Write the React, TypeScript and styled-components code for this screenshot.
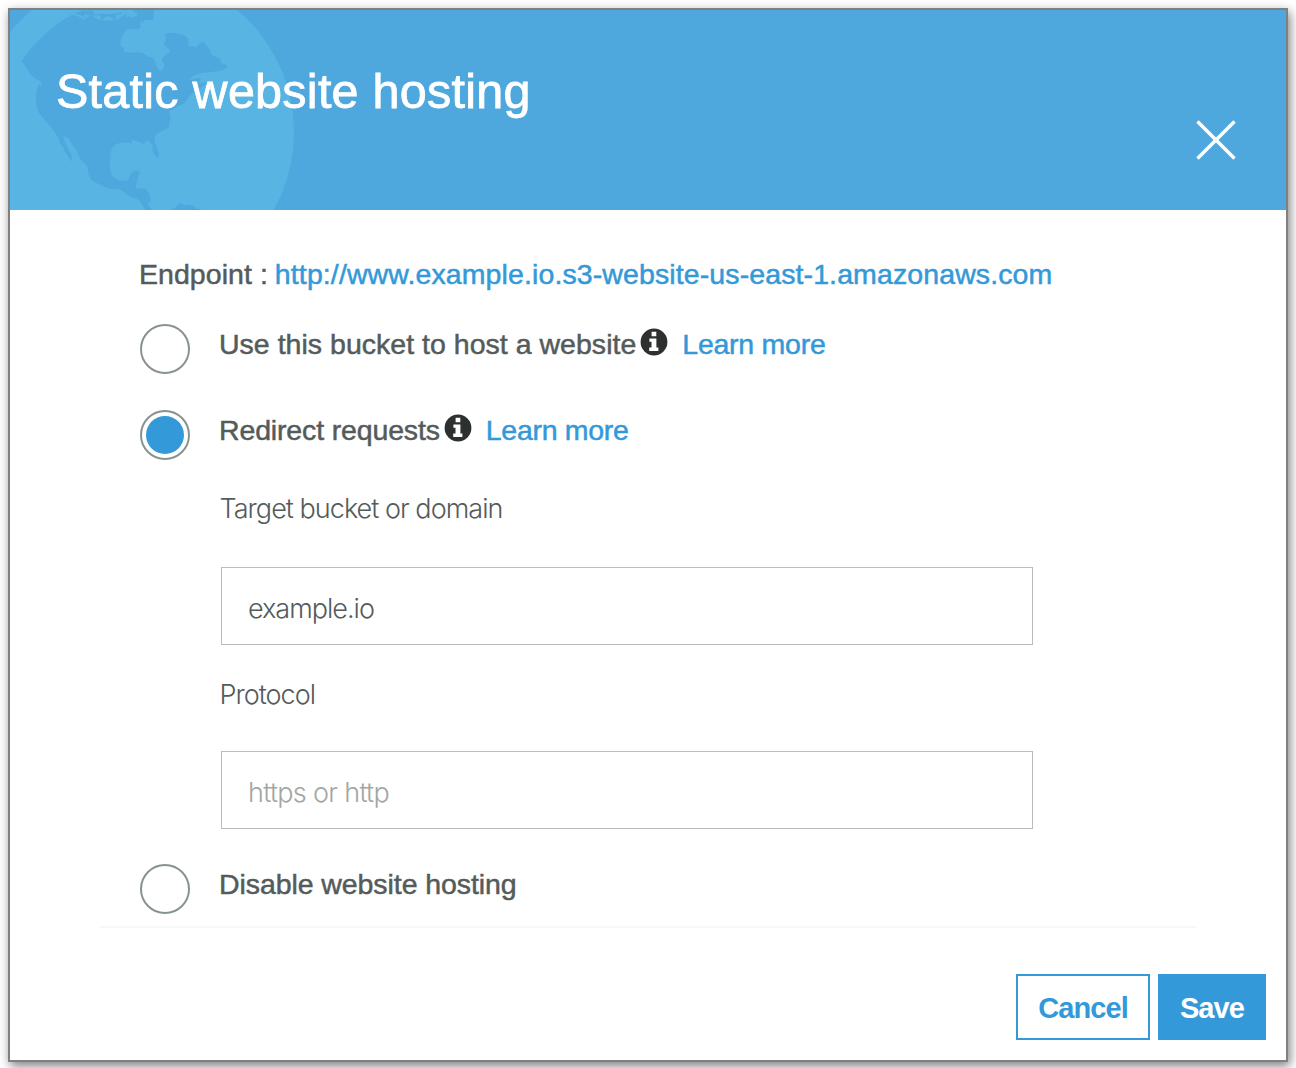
import React, { useState } from "react";
import styled, { createGlobalStyle } from "styled-components";

const GlobalStyle = createGlobalStyle`
  *, *::before, *::after { box-sizing: border-box; }
  body {
    margin: 0;
    background: #fff;
    overflow: hidden;
    font-family: "Liberation Sans", Arial, sans-serif;
    color: #545b5b;
  }
`;

const Page = styled.main`
  height: 1068px;
  padding: 8px;
  overflow: hidden;
`;

const Dialog = styled.section`
  display: flex;
  flex-direction: column;
  width: 1280px;
  height: 1054px;
  border: 2px solid #808080;
  background: #fff;
  box-shadow: 2px 4px 10px rgba(0, 0, 0, 0.5);
`;

const Header = styled.header`
  position: relative;
  flex: none;
  display: flex;
  justify-content: space-between;
  height: 200px;
  padding: 53px 49px 0 46px;
  background: #4ea8dd;
`;

const GlobeArt = styled.svg`
  position: absolute;
  left: 0;
  top: 0;
`;

const Title = styled.h1`
  position: relative;
  margin: 0;
  font-size: 48.5px;
  line-height: 56px;
  font-weight: 400;
  letter-spacing: 0.26px;
  color: #fff;
  -webkit-text-stroke: 0.8px #fff;
`;

const CloseButton = styled.button`
  width: 42px;
  height: 42px;
  margin-top: 56px;
  padding: 0;
  border: 0;
  background: none;
  svg { display: block; }
`;

const Body = styled.div`
  display: flex;
  flex-direction: column;
  margin: 0 90px;
  height: 718px;
  padding: 48px 0 0 40px;
  border-bottom: 2px solid #f6f7f7;
`;

const Text = styled.span<{ $spacing?: number }>`
  font-size: 28.5px;
  line-height: 32px;
  letter-spacing: ${(p) => p.$spacing ?? 0}px;
  white-space: nowrap;
  -webkit-text-stroke: 0.5px currentColor;
`;

const Link = styled(Text).attrs({ as: "a" })`
  color: #3399d8;
`;

const Endpoint = styled.div`
  display: flex;
  gap: 7px;
  height: 66px;
  margin-left: -1px;
`;

const Option = styled.div<{ $height: number }>`
  display: flex;
  flex: none;
  height: ${(p) => p.$height}px;
`;

const Radio = styled.button<{ $checked: boolean }>`
  flex: none;
  display: grid;
  place-items: center;
  width: 50px;
  height: 50px;
  margin-right: 29px;
  padding: 0;
  border: 2px solid #899292;
  border-radius: 50%;
  background: #fff;
  &::after {
    content: "";
    width: 38px;
    height: 38px;
    border-radius: 50%;
    background: ${(p) => (p.$checked ? "#3399d8" : "transparent")};
  }
`;

const OptionText = styled.div`
  display: flex;
  height: 36px;
  padding-top: 4px;
`;

const InfoIcon = styled.svg`
  flex: none;
  margin: 0 14px 0 4px;
`;

const Fields = styled.div`
  display: flex;
  flex: none;
  flex-direction: column;
  width: 812px;
  margin-left: 81px;
  height: 372px;
`;

const FieldLabel = styled.label<{ $spacing: number; $gap: number }>`
  height: ${(p) => p.$gap}px;
  margin-left: -1.5px;
  padding-top: 1px;
  font-family: Inter, sans-serif;
  font-weight: 300;
  font-size: 27px;
  line-height: 32px;
  letter-spacing: ${(p) => p.$spacing}px;
`;

const Field = styled.input<{ $spacing: number; $after: number }>`
  flex: none;
  width: 100%;
  height: 78px;
  margin-bottom: ${(p) => p.$after}px;
  padding: 4px 26px 0;
  border: 1px solid #b9bdbd;
  border-radius: 0;
  outline: 0;
  font-family: Inter, sans-serif;
  font-weight: 300;
  font-size: 27px;
  letter-spacing: ${(p) => p.$spacing}px;
  color: #545b5b;
  &::placeholder { color: #a3a6a6; opacity: 1; }
`;

const Footer = styled.footer`
  display: flex;
  justify-content: flex-end;
  gap: 8px;
  padding: 46px 20px 0;
`;

const Button = styled.button<{ $primary?: boolean; $width: number; $spacing: number }>`
  width: ${(p) => p.$width}px;
  height: 66px;
  padding: 2px 0 0;
  border: 2px solid #3399d8;
  background: ${(p) => (p.$primary ? "#3399d8" : "#fff")};
  color: ${(p) => (p.$primary ? "#fff" : "#3399d8")};
  font: 700 29px/32px "Liberation Sans", Arial, sans-serif;
  letter-spacing: ${(p) => p.$spacing}px;
`;

const Globe = () => (
  <GlobeArt width="300" height="200" viewBox="30 30 900 600" aria-hidden="true">
    <circle cx="403.5" cy="396" r="478.5" fill="#57b4e3" />
    <g fill="#4ea8dd">
      <path d="M64 184 C105 125 155 78 215 45 C228 44 241 51 248 60 L249 49 C238 44 230 42 223 40 C240 31 260 31 283 32 C276 37 283 43 290 43 C304 39 320 45 339 42 L365 36 L366 43 C354 41 348 43 347 50 L349 63 C340 60 337 52 330 50 C320 46 312 53 306 62 C300 55 304 48 298 46 C286 44 279 48 270 46 L256 43 C249 47 252 56 249 60 L272 46 L302 62 L349 61 L381 40 L377 58 L385 47 C397 57 412 49 413 40 C407 36 401 40 400 31 L462 30 L461 55 C455 64 444 59 435 59 C432 68 428 66 425 62 C418 67 424 77 420 85 L411 88 L385 88 C376 91 377 97 369 103 C364 113 361 124 360 136 L371 143 L373 156 C390 160 405 155 420 157 C435 159 437 171 452 171 C463 173 462 184 467 191 C471 202 474 211 484 213 C490 209 489 200 494 197 C493 188 485 185 487 174 C494 166 507 161 509 154 C510 145 494 142 491 130 C502 120 498 115 494 106 C502 95 518 99 528 101 C545 102 559 107 564 116 C567 126 563 131 567 142 C578 132 579 144 590 140 C599 131 602 125 613 127 C616 139 630 143 631 151 C629 163 643 171 661 176 C662 184 661 189 667 191 L680 194 L680 204 C669 207 664 214 648 214 C623 219 606 218 590 223 C580 226 570 236 566 247 C575 235 592 234 602 235 C605 239 596 242 595 248 L607 250 C620 247 629 243 635 244 L618 252 C602 263 585 273 568 288 L556 307 C544 316 525 324 508 333 L509 345 C517 354 505 369 507 382 C493 393 470 395 463 414 C464 430 473 443 477 464 C477 475 467 475 465 465 C457 453 457 447 459 437 C452 429 446 420 438 423 L431 433 C417 422 408 425 395 418 L396 430 C380 424 360 430 351 431 C337 438 331 452 332 466 C328 489 329 507 334 523 C340 537 360 545 383 541 C390 533 388 521 398 516 C405 511 415 510 420 517 C412 531 410 548 407 563 C417 568 426 564 435 565 C443 575 455 587 452 607 L442 606 C446 617 450 625 457 630 L436 630 C431 620 427 611 416 599 C404 592 398 594 391 590 C375 579 366 568 347 566 C326 572 302 554 282 545 C259 533 269 508 258 494 C244 482 236 473 233 457 C224 443 214 433 205 414 L189 409 C193 421 199 433 206 450 L215 466 L216 485 L208 475 C204 462 191 457 190 441 C176 431 181 418 169 404 C155 380 127 356 114 334 C105 306 106 275 117 251 L125 259 L123 244 C105 235 91 228 85 212 C79 210 83 205 75 199 C76 192 65 189 64 184 Z" />
      <path d="M512 630 C520 627 525 624 531 618 C537 607 548 607 551 616 C562 611 576 615 583 620 C592 629 604 626 607 630 Z" />
    </g>
  </GlobeArt>
);

const Info = () => (
  <InfoIcon width="28" height="28" viewBox="0 0 28 28" aria-label="More information">
    <circle cx="14" cy="14" r="13.4" fill="#2c302f" />
    <path fill="#fff" d="M11.6 3.7h4.7v4.5h-4.7zM9.4 10.6h7v8.8h2v3.5H9.2v-3.5h2.3v-5.6H9.4z" />
  </InfoIcon>
);

export default function App() {
  const [mode, setMode] = useState("redirect");
  const [target, setTarget] = useState("example.io");
  return (
    <>
      <GlobalStyle />
      <Page>
        <Dialog role="dialog">
          <Header>
            <Globe />
            <Title>Static website hosting</Title>
            <CloseButton aria-label="Close">
              <svg width="42" height="42" viewBox="0 0 42 42" fill="none" stroke="#fff" strokeWidth="3.4">
                <path d="M2.5 2.5 39.5 39.5M39.5 2.5 2.5 39.5" />
              </svg>
            </CloseButton>
          </Header>
          <Body>
            <Endpoint>
              <Text $spacing={0.05}>Endpoint :</Text>
              <Link $spacing={0.11}>http://www.example.io.s3-website-us-east-1.amazonaws.com</Link>
            </Endpoint>
            <Option $height={86}>
              <Radio $checked={mode === "host"} onClick={() => setMode("host")} aria-label="Host" />
              <OptionText>
                <Text $spacing={0.02}>Use this bucket to host a website</Text>
                <Info />
                <Link $spacing={-0.25}>Learn more</Link>
              </OptionText>
            </Option>
            <Option $height={82}>
              <Radio $checked={mode === "redirect"} onClick={() => setMode("redirect")} aria-label="Redirect" />
              <OptionText>
                <Text $spacing={-0.15}>Redirect requests</Text>
                <Info />
                <Link $spacing={-0.3}>Learn more</Link>
              </OptionText>
            </Option>
            <Fields>
              <FieldLabel $gap={75} $spacing={-0.97}>Target bucket or domain</FieldLabel>
              <Field $spacing={-1} $after={33} value={target} onChange={(e) => setTarget(e.target.value)} />
              <FieldLabel $gap={73} $spacing={-1}>Protocol</FieldLabel>
              <Field $spacing={-0.7} $after={0} placeholder="https or http" />
            </Fields>
            <Option $height={50}>
              <Radio $checked={mode === "off"} onClick={() => setMode("off")} aria-label="Disable" />
              <OptionText>
                <Text $spacing={-0.08}>Disable website hosting</Text>
              </OptionText>
            </Option>
          </Body>
          <Footer>
            <Button $width={134} $spacing={-0.9}>Cancel</Button>
            <Button $primary $width={108} $spacing={-0.9}>Save</Button>
          </Footer>
        </Dialog>
      </Page>
    </>
  );
}
